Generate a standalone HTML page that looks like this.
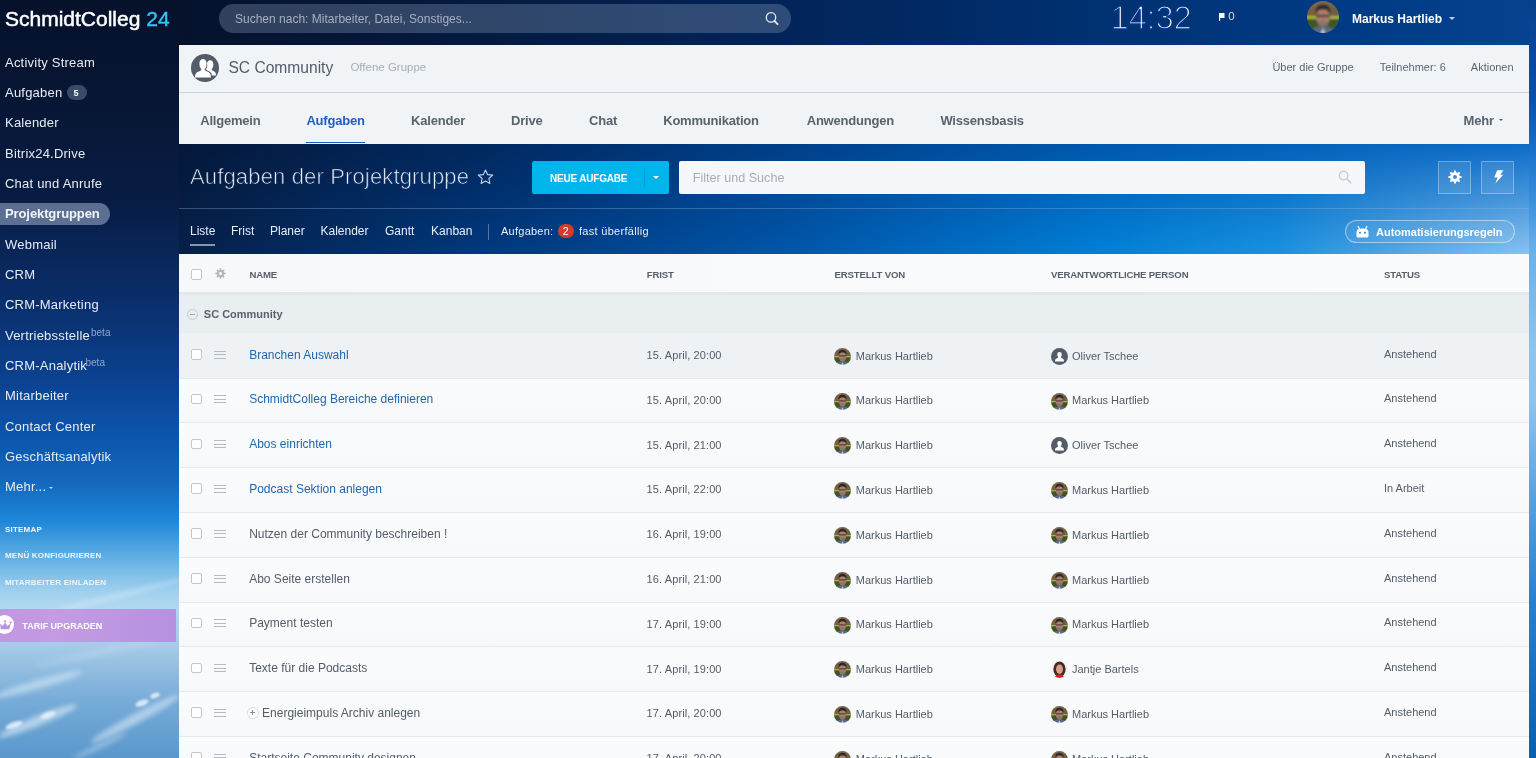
<!DOCTYPE html>
<html><head><meta charset="utf-8">
<style>
*{margin:0;padding:0;box-sizing:border-box}
html,body{width:1536px;height:758px;overflow:hidden}
body{position:relative;font-family:"Liberation Sans",sans-serif;line-height:1;background:#0a2a60}
.a{position:absolute;white-space:nowrap;line-height:1}
body{-webkit-font-smoothing:antialiased}
#sbbg{position:absolute;left:0;top:0;width:179px;height:758px;
background:
 linear-gradient(180deg, #06112a 0px, #071634 100px, #081c44 200px, #0a2e6a 300px, #0b4290 380px, #0c56ae 440px, #1466bc 480px, #1a7ed0 510px, #2088d8 522px, #4aa2e0 545px, #78bce8 570px, #a0d0ee 592px, #b0d8f0 606px, #a6cce8 645px, #8cbadf 675px, #78acd8 700px, #629ecf 740px, #5a98cc 758px);
}
#topbg{position:absolute;left:179px;top:0;width:1357px;height:45px;
background:linear-gradient(90deg, #06122c 0px, #041a40 300px, #02245a 620px, #00306f 900px, #003a84 1150px, #06428f 1357px);}
#bandbg{position:absolute;left:179px;top:143px;width:1357px;height:111px;
background:linear-gradient(90deg, #05183a 0px, #022a62 320px, #00408a 620px, #0058ac 920px, #0a6cc8 1357px);}
#bandbg2{position:absolute;left:179px;top:143px;width:1357px;height:111px;
background:linear-gradient(90deg, #062048 0px, #003a80 320px, #0058ac 620px, #0080d8 920px, #1a92e0 1100px, #4aa4e6 1200px, #8cc4f0 1357px);
-webkit-mask-image:linear-gradient(180deg, transparent 0%, #000 100%);mask-image:linear-gradient(180deg, transparent 0%, #000 100%);}
#rsbg{position:absolute;left:1529px;top:0;width:7px;height:758px;
background:linear-gradient(180deg,#083f8a 0px,#0a50a8 100px,#1a70c8 150px,#3a90dc 200px,#6ab0e8 250px,#8cc4ee 350px,#8ec4ee 400px,#5aa0dc 500px,#2a80cc 600px,#0b5fa8 758px);}
</style></head>
<body>
<svg width="0" height="0" style="position:absolute"><defs>
<radialGradient id="skin" cx="50%" cy="45%" r="50%"><stop offset="0" stop-color="#d3a080"/><stop offset="1" stop-color="#a0705a"/></radialGradient>
<filter id="bl" x="-10%" y="-10%" width="120%" height="120%"><feGaussianBlur stdDeviation="1.1"/></filter>
<g id="mh"><g filter="url(#bl)"><rect x="-2" y="-2" width="36" height="36" fill="#5e4e3a"/><rect x="-2" y="-2" width="36" height="9" fill="#7a6650"/><rect x="-2" y="6" width="11" height="9" fill="#7c5e40"/><rect x="23" y="6" width="11" height="9" fill="#6e5e44"/><rect x="-2" y="15" width="36" height="3" fill="#a2b246"/><rect x="-2" y="18" width="36" height="16" fill="#3e5628"/><path d="M2 34 C4 27 9 25.5 16 25.5 C23 25.5 28 27 30 34 Z" fill="#5a6a82"/><path d="M12.5 34 L16 27 L19.5 34 Z" fill="#b8c4d8"/><ellipse cx="16" cy="16.5" rx="6.6" ry="9.3" fill="#ac7e6c"/><path d="M8.5 12 C8.3 5.5 11.5 3.5 16 3.5 C20.5 3.5 23.7 5.5 23.5 12 C22 9.2 19 8.6 16 8.6 C13 8.6 10 9.2 8.5 12 Z" fill="#2e2a28"/><rect x="9" y="13.8" width="14" height="2.4" rx="1" fill="#4a3a36" opacity=".85"/><ellipse cx="16" cy="22.5" rx="5" ry="3" fill="#8a7468"/></g></g>
<g id="jb"><g filter="url(#bl)"><rect x="-2" y="-2" width="36" height="36" fill="#f0f2f4"/><ellipse cx="16" cy="15.5" rx="11.5" ry="14.5" fill="#4a2a22"/><ellipse cx="16" cy="15.5" rx="6.5" ry="9" fill="#d8a08a"/><path d="M6 34 C8 27 11 25.5 16 25.5 C21 25.5 24 27 26 34 Z" fill="#d82222"/></g></g>
</defs></svg>
<div id="sbbg"></div><div id="topbg"></div><div id="bandbg"></div><div id="bandbg2"></div><div id="rsbg"></div>
<div id="wrap" style="position:absolute;left:0;top:0;width:1536px;height:758px;will-change:transform">
<div class="a" style="left:5.00px;top:8.00px;font-size:21px;color:#fff;letter-spacing:0px;-webkit-text-stroke:0.5px #fff">SchmidtColleg <span style="color:#2fc6f6;-webkit-text-stroke:0.4px #2fc6f6">24</span></div>
<div class="a" style="left:-10px;top:680px;width:95px;height:9px;border-radius:50%;background:rgba(240,248,255,0.45);transform:rotate(-16deg);filter:blur(2.5px)"></div>
<div class="a" style="left:-5px;top:716px;width:85px;height:10px;border-radius:50%;background:rgba(240,248,255,0.55);transform:rotate(-22deg);filter:blur(2.5px)"></div>
<div class="a" style="left:85px;top:714px;width:100px;height:10px;border-radius:50%;background:rgba(240,248,255,0.5);transform:rotate(-28deg);filter:blur(2.5px)"></div>
<div class="a" style="left:30px;top:650px;width:140px;height:5px;border-radius:50%;background:rgba(240,248,255,0.25);transform:rotate(-12deg);filter:blur(3px)"></div>
<div class="a" style="left:5px;top:722px;width:18px;height:6px;border-radius:50%;background:rgba(240,248,255,0.8);transform:rotate(-20deg);filter:blur(1.2px)"></div>
<div class="a" style="left:40px;top:712px;width:16px;height:6px;border-radius:50%;background:rgba(240,248,255,0.75);transform:rotate(-20deg);filter:blur(1.2px)"></div>
<div class="a" style="left:135px;top:700px;width:14px;height:6px;border-radius:50%;background:rgba(240,248,255,0.8);transform:rotate(-20deg);filter:blur(1.2px)"></div>
<div class="a" style="left:150px;top:693px;width:10px;height:5px;border-radius:50%;background:rgba(240,248,255,0.8);transform:rotate(-20deg);filter:blur(1.2px)"></div>
<div class="a" style="left:70px;top:743px;width:60px;height:6px;border-radius:50%;background:rgba(240,248,255,0.3);transform:rotate(-25deg);filter:blur(2px)"></div>
<div class="a" style="left:40px;top:594px;width:150px;height:5px;border-radius:50%;background:rgba(240,248,255,0.35);transform:rotate(-14deg);filter:blur(2.5px)"></div>
<div class="a" style="left:5.00px;top:56.00px;font-size:13px;color:#e6ebf2;letter-spacing:0.22px">Activity Stream</div>
<div class="a" style="left:5.00px;top:86.00px;font-size:13px;color:#e6ebf2;letter-spacing:0.22px">Aufgaben</div>
<div class="a" style="left:67.00px;top:85.33px;width:20.00px;height:15.00px;background:rgba(120,140,170,.45);border-radius:8px"></div>
<div class="a" style="left:73.50px;top:89.00px;font-size:9px;color:#fff;font-weight:bold;">5</div>
<div class="a" style="left:5.00px;top:116.00px;font-size:13px;color:#e6ebf2;letter-spacing:0.22px">Kalender</div>
<div class="a" style="left:5.00px;top:147.00px;font-size:13px;color:#e6ebf2;letter-spacing:0.22px">Bitrix24.Drive</div>
<div class="a" style="left:5.00px;top:177.00px;font-size:13px;color:#e6ebf2;letter-spacing:0.22px">Chat und Anrufe</div>
<div class="a" style="left:-10.00px;top:203.05px;width:119.50px;height:21.70px;background:rgba(195,210,235,.45);border-radius:11px"></div>
<div class="a" style="left:5.00px;top:207.00px;font-size:13px;color:#f2f5f9;font-weight:bold;letter-spacing:-0.1px">Projektgruppen</div>
<div class="a" style="left:5.00px;top:238.00px;font-size:13px;color:#e6ebf2;letter-spacing:0.22px">Webmail</div>
<div class="a" style="left:5.00px;top:268.00px;font-size:13px;color:#e6ebf2;letter-spacing:0.22px">CRM</div>
<div class="a" style="left:5.00px;top:298.00px;font-size:13px;color:#e6ebf2;letter-spacing:0.22px">CRM-Marketing</div>
<div class="a" style="left:5.00px;top:329.00px;font-size:13px;color:#e6ebf2;letter-spacing:0.22px">Vertriebsstelle</div>
<div class="a" style="left:91.00px;top:328.00px;font-size:10px;color:#8ea6c9;">beta</div>
<div class="a" style="left:5.00px;top:359.00px;font-size:13px;color:#e6ebf2;letter-spacing:0.22px">CRM-Analytik</div>
<div class="a" style="left:85.50px;top:358.00px;font-size:10px;color:#8ea6c9;">beta</div>
<div class="a" style="left:5.00px;top:389.00px;font-size:13px;color:#e6ebf2;letter-spacing:0.22px">Mitarbeiter</div>
<div class="a" style="left:5.00px;top:420.00px;font-size:13px;color:#e6ebf2;letter-spacing:0.22px">Contact Center</div>
<div class="a" style="left:5.00px;top:450.00px;font-size:13px;color:#e6ebf2;letter-spacing:0.22px">Geschäftsanalytik</div>
<div class="a" style="left:5.00px;top:480.00px;font-size:13px;color:#e6ebf2;letter-spacing:0.22px">Mehr...</div>
<div class="a" style="left:49px;top:487.2px;width:0;height:0;border-left:2.5px solid transparent;border-right:2.5px solid transparent;border-top:2.5px solid #cbd6e6"></div>
<div class="a" style="left:5.00px;top:526.00px;font-size:8px;color:#eef5fb;font-weight:bold;letter-spacing:0.2px">SITEMAP</div>
<div class="a" style="left:5.00px;top:552.00px;font-size:8px;color:#eef5fb;font-weight:bold;letter-spacing:0.2px">MENÜ KONFIGURIEREN</div>
<div class="a" style="left:5.00px;top:579.00px;font-size:8px;color:#eef5fb;font-weight:bold;letter-spacing:0.2px">MITARBEITER EINLADEN</div>
<div class="a" style="left:0.00px;top:608.60px;width:176.00px;height:33.20px;background:linear-gradient(90deg,#bf96e0,#c59ce3 30%,#b690e0 100%)"></div>
<div class="a" style="left:-5px;top:615.2px;width:19px;height:19px;border-radius:50%;background:#fff"></div>
<svg class="a" style="left:0;top:619.5px" width="12" height="10" viewBox="0 0 12 10"><circle cx="5" cy="1.3" r="1.1" fill="#b991e0"/><circle cx="10.6" cy="2.6" r="1.1" fill="#b991e0"/><path d="M0 3.5 L2.8 6 L5 2.2 L7.3 6 L10.6 3.6 L9.3 9.3 H0.8 Z" fill="#b991e0"/></svg>
<div class="a" style="left:22.30px;top:622.00px;font-size:9px;color:#fff;font-weight:bold;letter-spacing:0px">TARIF UPGRADEN</div>
<div class="a" style="left:219.00px;top:4.00px;width:572.00px;height:29.00px;background:rgba(135,155,185,.34);border-radius:15px"></div>
<div class="a" style="left:235.00px;top:13.00px;font-size:12px;color:#a7b0c0;">Suchen nach: Mitarbeiter, Datei, Sonstiges...</div>
<svg class="a" style="left:764px;top:10px" width="16" height="16" viewBox="0 0 16 16"><circle cx="7" cy="7.4" r="4.7" fill="none" stroke="#e4e9ef" stroke-width="1.3"/><path d="M10.4 11 L13.6 14.2" stroke="#e4e9ef" stroke-width="1.8" stroke-linecap="round"/></svg>
<div class="a" style="left:1110.50px;top:1.00px;font-size:33px;color:#f4f7fb;letter-spacing:-0.3px;-webkit-text-stroke:1.7px #023782">14:32</div>
<svg class="a" style="left:1219px;top:12.8px" width="6" height="8.2" viewBox="0 0 6 8.2"><path d="M0 0 H5.5 V5 H1.2 V8.2 H0 Z" fill="#fff"/></svg>
<div class="a" style="left:1228.30px;top:11.00px;font-size:11.5px;color:rgba(225,232,242,.9);">0</div>
<div class="a" style="left:1307px;top:1px;width:32px;height:32px;border-radius:50%;overflow:hidden"><svg width="32" height="32" viewBox="0 0 32 32"><use href="#mh"/></svg></div>
<div class="a" style="left:1352.00px;top:13.00px;font-size:12px;color:#fff;font-weight:bold;">Markus Hartlieb</div>
<div class="a" style="left:1449px;top:17px;width:0;height:0;border-left:3px solid transparent;border-right:3px solid transparent;border-top:3px solid #c5d0e0"></div>
<div class="a" style="left:179.00px;top:45.00px;width:1350.00px;height:98.50px;background:#f1f4f7"></div>
<div class="a" style="left:179.00px;top:92.00px;width:1350.00px;height:1.00px;background:#cfd4da"></div>
<svg class="a" style="left:191px;top:54px" width="28" height="28" viewBox="0 0 28 28"><circle cx="14" cy="14" r="14" fill="#535c69"/><path d="M4 23.5 C4 19 6 18 9 17 C10 16.5 10.5 16 10.3 15 C9 14 8.3 11.5 8.4 9.5 C8.5 6.5 10 5 12 5 C14 5 15.5 6.5 15.6 9.5 C15.7 11.5 15 14 13.7 15 C13.5 16 14 16.5 15 17 C18 18 20 19 20 23.5 Z" fill="#fff"/><path d="M16 9.2 C16.5 7 17.7 6.2 19 6.2 C21 6.2 22.4 7.8 22.4 10.3 C22.4 12.3 21.7 14.2 20.7 15 C20.5 16 21 16.3 22 16.8 C24 17.6 25 18.7 25 21.5 L21 21.5 C20.8 19 19.5 17.8 16.5 16.6 C15.5 16.2 15 15.5 15 15 C16.3 13.7 16.6 11.7 16 9.2 Z" fill="#fff"/></svg>
<div class="a" style="left:228.40px;top:60.00px;font-size:15.6px;color:#535c69;">SC Community</div>
<div class="a" style="left:350.40px;top:62.00px;font-size:11.5px;color:#a9aeb5;">Offene Gruppe</div>
<div class="a" style="left:1272.40px;top:62.00px;font-size:11px;color:#5f6670;">Über die Gruppe</div>
<div class="a" style="left:1379.80px;top:62.00px;font-size:11px;color:#5f6670;">Teilnehmer: 6</div>
<div class="a" style="left:1470.80px;top:62.00px;font-size:11px;color:#5f6670;">Aktionen</div>
<div class="a" style="left:200.20px;top:114.00px;font-size:13px;color:#5a626e;font-weight:bold;letter-spacing:-0.2px">Allgemein</div>
<div class="a" style="left:306.40px;top:114.00px;font-size:13px;color:#1f5ec6;font-weight:bold;letter-spacing:-0.2px">Aufgaben</div>
<div class="a" style="left:306.40px;top:141.80px;width:58.60px;height:1.70px;background:#1a5bc8"></div>
<div class="a" style="left:411.00px;top:114.00px;font-size:13px;color:#5a626e;font-weight:bold;letter-spacing:-0.2px">Kalender</div>
<div class="a" style="left:511.00px;top:114.00px;font-size:13px;color:#5a626e;font-weight:bold;letter-spacing:-0.2px">Drive</div>
<div class="a" style="left:589.00px;top:114.00px;font-size:13px;color:#5a626e;font-weight:bold;letter-spacing:-0.2px">Chat</div>
<div class="a" style="left:663.20px;top:114.00px;font-size:13px;color:#5a626e;font-weight:bold;letter-spacing:-0.2px">Kommunikation</div>
<div class="a" style="left:806.70px;top:114.00px;font-size:13px;color:#5a626e;font-weight:bold;letter-spacing:-0.2px">Anwendungen</div>
<div class="a" style="left:940.40px;top:114.00px;font-size:13px;color:#5a626e;font-weight:bold;letter-spacing:-0.2px">Wissensbasis</div>
<div class="a" style="left:1463.50px;top:114.00px;font-size:13px;color:#5a626e;font-weight:bold;letter-spacing:-0.2px">Mehr</div>
<div class="a" style="left:1499px;top:119px;width:0;height:0;border-left:2.5px solid transparent;border-right:2.5px solid transparent;border-top:2.5px solid #535c69"></div>
<svg class="a" style="left:180px;top:155px" width="300" height="40"><defs><linearGradient id="tg" gradientUnits="userSpaceOnUse" x1="0" y1="0" x2="300" y2="0"><stop offset="0" stop-color="#061b42"/><stop offset="1" stop-color="#022f6c"/></linearGradient></defs><text x="10" y="29" font-family="Liberation Sans" font-size="22" letter-spacing="0.15" fill="#e9eff8" stroke="url(#tg)" stroke-width="0.7">Aufgaben der Projektgruppe</text></svg>
<svg class="a" style="left:477px;top:169px" width="17" height="16" viewBox="0 0 17 16"><path d="M8.5 1 L10.6 5.6 L15.7 6.1 L11.9 9.5 L12.9 14.5 L8.5 12 L4.1 14.5 L5.1 9.5 L1.3 6.1 L6.4 5.6 Z" fill="none" stroke="#c8d4e6" stroke-width="1.1" stroke-linejoin="round"/></svg>
<div class="a" style="left:532.00px;top:161.00px;width:137.00px;height:33.00px;background:#00b4ec;border-radius:2px"></div>
<div class="a" style="left:643.50px;top:168.00px;width:1.00px;height:19.00px;background:rgba(0,90,140,.25)"></div>
<div class="a" style="left:550.00px;top:174.00px;font-size:10px;color:#fff;font-weight:bold;letter-spacing:-0.2px">NEUE AUFGABE</div>
<div class="a" style="left:653px;top:176px;width:0;height:0;border-left:3px solid transparent;border-right:3px solid transparent;border-top:3px solid #fff"></div>
<div class="a" style="left:679.00px;top:161.00px;width:686.00px;height:33.00px;background:#f5f7fa;border-radius:2px"></div>
<div class="a" style="left:692.70px;top:172.00px;font-size:12.6px;color:#a8adb4;">Filter und Suche</div>
<svg class="a" style="left:1338px;top:170px" width="14" height="14" viewBox="0 0 14 14"><circle cx="5.6" cy="5.6" r="4.3" fill="none" stroke="#c4c8cd" stroke-width="1.2"/><path d="M8.8 8.8 L12.6 12.6" stroke="#c4c8cd" stroke-width="1.5" stroke-linecap="round"/></svg>
<div class="a" style="left:1438.00px;top:161.00px;width:33.00px;height:33.00px;background:rgba(255,255,255,.1);border:1px solid rgba(255,255,255,.3)"></div>
<svg class="a" style="left:1448px;top:170.3px" width="14" height="14" viewBox="0 0 16 16"><path fill="#fff" fill-rule="evenodd" d="M6.93 0.48 L9.07 0.48 L9.23 2.54 L11.00 3.27 L12.56 1.92 L14.08 3.44 L12.73 5.00 L13.46 6.77 L15.52 6.93 L15.52 9.07 L13.46 9.23 L12.73 11.00 L14.08 12.56 L12.56 14.08 L11.00 12.73 L9.23 13.46 L9.07 15.52 L6.93 15.52 L6.77 13.46 L5.00 12.73 L3.44 14.08 L1.92 12.56 L3.27 11.00 L2.54 9.23 L0.48 9.07 L0.48 6.93 L2.54 6.77 L3.27 5.00 L1.92 3.44 L3.44 1.92 L5.00 3.27 L6.77 2.54 Z M10.30 8.00 A2.3 2.3 0 1 0 5.70 8.00 A2.3 2.3 0 1 0 10.30 8.00 Z"/></svg>
<div class="a" style="left:1481.00px;top:161.00px;width:33.00px;height:33.00px;background:rgba(255,255,255,.1);border:1px solid rgba(255,255,255,.3)"></div>
<svg class="a" style="left:1492.5px;top:170px" width="11" height="14" viewBox="0 0 11 14"><path d="M4.2 0.3 L10.5 0.3 L7.2 4.8 L10.2 4.8 L2.3 13.6 L4.6 7.6 L1.2 7.6 Z" fill="#fff"/></svg>
<div class="a" style="left:179.00px;top:208.00px;width:1350.00px;height:1.00px;background:rgba(150,180,220,.35)"></div>
<div class="a" style="left:190.00px;top:225.00px;font-size:12px;color:#e6edf7;">Liste</div>
<div class="a" style="left:230.90px;top:225.00px;font-size:12px;color:#e6edf7;">Frist</div>
<div class="a" style="left:270.00px;top:225.00px;font-size:12px;color:#e6edf7;">Planer</div>
<div class="a" style="left:320.50px;top:225.00px;font-size:12px;color:#e6edf7;">Kalender</div>
<div class="a" style="left:385.00px;top:225.00px;font-size:12px;color:#e6edf7;">Gantt</div>
<div class="a" style="left:431.10px;top:225.00px;font-size:12px;color:#e6edf7;">Kanban</div>
<div class="a" style="left:190.00px;top:244.00px;width:25.00px;height:2.00px;background:rgba(220,230,245,.6)"></div>
<div class="a" style="left:488.00px;top:224.00px;width:1.00px;height:16.00px;background:rgba(200,215,235,.4)"></div>
<div class="a" style="left:501.00px;top:226.00px;font-size:11px;color:#e6edf7;letter-spacing:0.25px">Aufgaben:</div>
<div class="a" style="left:557.50px;top:224.30px;width:16.50px;height:13.70px;background:#d63a2d;border-radius:7px"></div>
<div class="a" style="left:562.80px;top:226.00px;font-size:10.5px;color:#fff;">2</div>
<div class="a" style="left:579.00px;top:226.00px;font-size:11px;color:#e6edf7;letter-spacing:0.3px">fast überfällig</div>
<div class="a" style="left:1345.00px;top:220.00px;width:170.00px;height:23.00px;border:1px solid rgba(255,255,255,.45);border-radius:12px;background:rgba(255,255,255,.08)"></div>
<svg class="a" style="left:1355px;top:225px" width="15" height="13" viewBox="0 0 15 13"><path d="M3 1 L4.5 4 M12 1 L10.5 4" stroke="#fff" stroke-width="1.2"/><path d="M1.5 7 C1.5 4.5 3.5 3.5 7.5 3.5 C11.5 3.5 13.5 4.5 13.5 7 V11 C13.5 12 12.5 12.5 11.5 12.5 H3.5 C2.5 12.5 1.5 12 1.5 11 Z" fill="#fff"/><circle cx="5" cy="7.8" r="1" fill="#3a8ad8"/><circle cx="10" cy="7.8" r="1" fill="#3a8ad8"/></svg>
<div class="a" style="left:1376.00px;top:227.00px;font-size:11px;color:#fff;font-weight:bold;">Automatisierungsregeln</div>
<div class="a" style="left:179.00px;top:254.00px;width:1350.00px;height:38.00px;background:linear-gradient(90deg,#f6f8fa,#f9fbfc)"></div>
<div class="a" style="left:179.00px;top:292.00px;width:1350.00px;height:2.50px;background:#e4e8ec"></div>
<div class="a" style="left:191.00px;top:269.00px;width:10.50px;height:10.50px;border:1px solid #c2c7cd;border-radius:2px;background:#fff"></div>
<svg class="a" style="left:215.2px;top:268px" width="11" height="11" viewBox="0 0 16 16"><path fill="#b3b8bf" fill-rule="evenodd" d="M6.93 0.48 L9.07 0.48 L9.23 2.54 L11.00 3.27 L12.56 1.92 L14.08 3.44 L12.73 5.00 L13.46 6.77 L15.52 6.93 L15.52 9.07 L13.46 9.23 L12.73 11.00 L14.08 12.56 L12.56 14.08 L11.00 12.73 L9.23 13.46 L9.07 15.52 L6.93 15.52 L6.77 13.46 L5.00 12.73 L3.44 14.08 L1.92 12.56 L3.27 11.00 L2.54 9.23 L0.48 9.07 L0.48 6.93 L2.54 6.77 L3.27 5.00 L1.92 3.44 L3.44 1.92 L5.00 3.27 L6.77 2.54 Z M10.30 8.00 A2.3 2.3 0 1 0 5.70 8.00 A2.3 2.3 0 1 0 10.30 8.00 Z"/></svg>
<div class="a" style="left:249.40px;top:270.00px;font-size:9.6px;color:#58606b;font-weight:bold;letter-spacing:-0.15px">NAME</div>
<div class="a" style="left:646.70px;top:270.00px;font-size:9.6px;color:#58606b;font-weight:bold;letter-spacing:-0.15px">FRIST</div>
<div class="a" style="left:834.50px;top:270.00px;font-size:9.6px;color:#58606b;font-weight:bold;letter-spacing:-0.15px">ERSTELLT VON</div>
<div class="a" style="left:1051.00px;top:270.00px;font-size:9.6px;color:#58606b;font-weight:bold;letter-spacing:-0.15px">VERANTWORTLICHE PERSON</div>
<div class="a" style="left:1384.00px;top:270.00px;font-size:9.6px;color:#58606b;font-weight:bold;letter-spacing:-0.15px">STATUS</div>
<div class="a" style="left:179.00px;top:294.50px;width:1350.00px;height:38.50px;background:#e9eef1"></div>
<div class="a" style="left:186.5px;top:308.5px;width:11px;height:11px;border:1px solid #c5cad0;border-radius:50%"></div>
<div class="a" style="left:189.50px;top:313.50px;width:5.00px;height:1.00px;background:#a0a6ad"></div>
<div class="a" style="left:203.80px;top:309.00px;font-size:11px;color:#59616d;font-weight:bold;">SC Community</div>
<div class="a" style="left:179.00px;top:333.00px;width:1350.00px;height:44.81px;background:#eef2f4"></div>
<div class="a" style="left:191.00px;top:349.00px;width:10.50px;height:10.50px;border:1px solid #c2c7cd;border-radius:2px;background:#fff"></div>
<div class="a" style="left:214.00px;top:350.50px;width:12.00px;height:1.00px;background:#b6bbc1"></div>
<div class="a" style="left:214.00px;top:354.00px;width:12.00px;height:1.00px;background:#b6bbc1"></div>
<div class="a" style="left:214.00px;top:357.50px;width:12.00px;height:1.00px;background:#b6bbc1"></div>
<div class="a" style="left:249.20px;top:349.00px;font-size:12px;color:#2067b0;">Branchen Auswahl</div>
<div class="a" style="left:646.60px;top:350.00px;font-size:11px;color:#535c69;letter-spacing:0.1px">15. April, 20:00</div>
<div class="a" style="left:834.00px;top:347.70px;width:17px;height:17px;border-radius:50%;overflow:hidden"><svg width="17" height="17" viewBox="0 0 32 32"><use href="#mh"/></svg></div>
<div class="a" style="left:855.80px;top:351.00px;font-size:11px;color:#535c69;">Markus Hartlieb</div>
<svg class="a" style="left:1051.20px;top:347.70px" width="17" height="17" viewBox="0 0 17 17"><circle cx="8.5" cy="8.5" r="8.5" fill="#535c69"/><path d="M4 13.6 C4 11.3 5 10.6 6.6 10.1 C7.2 9.9 7.3 9.5 7.1 9.1 C6.5 8.5 6.3 7.4 6.3 6.3 C6.3 4.7 7.2 3.9 8.5 3.9 C9.8 3.9 10.7 4.7 10.7 6.3 C10.7 7.4 10.5 8.5 9.9 9.1 C9.7 9.5 9.8 9.9 10.4 10.1 C12 10.6 13 11.3 13 13.6 Z" fill="#fff"/></svg>
<div class="a" style="left:1072.00px;top:351.00px;font-size:11px;color:#535c69;">Oliver Tschee</div>
<div class="a" style="left:1384.00px;top:349.00px;font-size:11px;color:#535c69;">Anstehend</div>
<div class="a" style="left:179.00px;top:377.81px;width:1350.00px;height:44.81px;background:linear-gradient(180deg,#fbfcfd,#f6f8fa)"></div>
<div class="a" style="left:179.00px;top:377.61px;width:1350.00px;height:1.00px;background:#e6eaee"></div>
<div class="a" style="left:191.00px;top:393.81px;width:10.50px;height:10.50px;border:1px solid #c2c7cd;border-radius:2px;background:#fff"></div>
<div class="a" style="left:214.00px;top:395.31px;width:12.00px;height:1.00px;background:#b6bbc1"></div>
<div class="a" style="left:214.00px;top:398.81px;width:12.00px;height:1.00px;background:#b6bbc1"></div>
<div class="a" style="left:214.00px;top:402.31px;width:12.00px;height:1.00px;background:#b6bbc1"></div>
<div class="a" style="left:249.20px;top:393.00px;font-size:12px;color:#2067b0;">SchmidtColleg Bereiche definieren</div>
<div class="a" style="left:646.60px;top:395.00px;font-size:11px;color:#535c69;letter-spacing:0.1px">15. April, 20:00</div>
<div class="a" style="left:834.00px;top:392.51px;width:17px;height:17px;border-radius:50%;overflow:hidden"><svg width="17" height="17" viewBox="0 0 32 32"><use href="#mh"/></svg></div>
<div class="a" style="left:855.80px;top:395.00px;font-size:11px;color:#535c69;">Markus Hartlieb</div>
<div class="a" style="left:1051.20px;top:392.51px;width:17px;height:17px;border-radius:50%;overflow:hidden"><svg width="17" height="17" viewBox="0 0 32 32"><use href="#mh"/></svg></div>
<div class="a" style="left:1072.00px;top:395.00px;font-size:11px;color:#535c69;">Markus Hartlieb</div>
<div class="a" style="left:1384.00px;top:393.00px;font-size:11px;color:#535c69;">Anstehend</div>
<div class="a" style="left:179.00px;top:422.62px;width:1350.00px;height:44.81px;background:linear-gradient(180deg,#fbfcfd,#f6f8fa)"></div>
<div class="a" style="left:179.00px;top:422.42px;width:1350.00px;height:1.00px;background:#e6eaee"></div>
<div class="a" style="left:191.00px;top:438.62px;width:10.50px;height:10.50px;border:1px solid #c2c7cd;border-radius:2px;background:#fff"></div>
<div class="a" style="left:214.00px;top:440.12px;width:12.00px;height:1.00px;background:#b6bbc1"></div>
<div class="a" style="left:214.00px;top:443.62px;width:12.00px;height:1.00px;background:#b6bbc1"></div>
<div class="a" style="left:214.00px;top:447.12px;width:12.00px;height:1.00px;background:#b6bbc1"></div>
<div class="a" style="left:249.20px;top:438.00px;font-size:12px;color:#2067b0;">Abos einrichten</div>
<div class="a" style="left:646.60px;top:440.00px;font-size:11px;color:#535c69;letter-spacing:0.1px">15. April, 21:00</div>
<div class="a" style="left:834.00px;top:437.32px;width:17px;height:17px;border-radius:50%;overflow:hidden"><svg width="17" height="17" viewBox="0 0 32 32"><use href="#mh"/></svg></div>
<div class="a" style="left:855.80px;top:440.00px;font-size:11px;color:#535c69;">Markus Hartlieb</div>
<svg class="a" style="left:1051.20px;top:437.32px" width="17" height="17" viewBox="0 0 17 17"><circle cx="8.5" cy="8.5" r="8.5" fill="#535c69"/><path d="M4 13.6 C4 11.3 5 10.6 6.6 10.1 C7.2 9.9 7.3 9.5 7.1 9.1 C6.5 8.5 6.3 7.4 6.3 6.3 C6.3 4.7 7.2 3.9 8.5 3.9 C9.8 3.9 10.7 4.7 10.7 6.3 C10.7 7.4 10.5 8.5 9.9 9.1 C9.7 9.5 9.8 9.9 10.4 10.1 C12 10.6 13 11.3 13 13.6 Z" fill="#fff"/></svg>
<div class="a" style="left:1072.00px;top:440.00px;font-size:11px;color:#535c69;">Oliver Tschee</div>
<div class="a" style="left:1384.00px;top:438.00px;font-size:11px;color:#535c69;">Anstehend</div>
<div class="a" style="left:179.00px;top:467.43px;width:1350.00px;height:44.81px;background:linear-gradient(180deg,#fbfcfd,#f6f8fa)"></div>
<div class="a" style="left:179.00px;top:467.23px;width:1350.00px;height:1.00px;background:#e6eaee"></div>
<div class="a" style="left:191.00px;top:483.43px;width:10.50px;height:10.50px;border:1px solid #c2c7cd;border-radius:2px;background:#fff"></div>
<div class="a" style="left:214.00px;top:484.93px;width:12.00px;height:1.00px;background:#b6bbc1"></div>
<div class="a" style="left:214.00px;top:488.43px;width:12.00px;height:1.00px;background:#b6bbc1"></div>
<div class="a" style="left:214.00px;top:491.93px;width:12.00px;height:1.00px;background:#b6bbc1"></div>
<div class="a" style="left:249.20px;top:483.00px;font-size:12px;color:#2067b0;">Podcast Sektion anlegen</div>
<div class="a" style="left:646.60px;top:484.00px;font-size:11px;color:#535c69;letter-spacing:0.1px">15. April, 22:00</div>
<div class="a" style="left:834.00px;top:482.13px;width:17px;height:17px;border-radius:50%;overflow:hidden"><svg width="17" height="17" viewBox="0 0 32 32"><use href="#mh"/></svg></div>
<div class="a" style="left:855.80px;top:485.00px;font-size:11px;color:#535c69;">Markus Hartlieb</div>
<div class="a" style="left:1051.20px;top:482.13px;width:17px;height:17px;border-radius:50%;overflow:hidden"><svg width="17" height="17" viewBox="0 0 32 32"><use href="#mh"/></svg></div>
<div class="a" style="left:1072.00px;top:485.00px;font-size:11px;color:#535c69;">Markus Hartlieb</div>
<div class="a" style="left:1384.00px;top:483.00px;font-size:11px;color:#535c69;">In Arbeit</div>
<div class="a" style="left:179.00px;top:512.24px;width:1350.00px;height:44.81px;background:linear-gradient(180deg,#fbfcfd,#f6f8fa)"></div>
<div class="a" style="left:179.00px;top:512.04px;width:1350.00px;height:1.00px;background:#e6eaee"></div>
<div class="a" style="left:191.00px;top:528.24px;width:10.50px;height:10.50px;border:1px solid #c2c7cd;border-radius:2px;background:#fff"></div>
<div class="a" style="left:214.00px;top:529.74px;width:12.00px;height:1.00px;background:#b6bbc1"></div>
<div class="a" style="left:214.00px;top:533.24px;width:12.00px;height:1.00px;background:#b6bbc1"></div>
<div class="a" style="left:214.00px;top:536.74px;width:12.00px;height:1.00px;background:#b6bbc1"></div>
<div class="a" style="left:249.20px;top:528.00px;font-size:12px;color:#535c69;">Nutzen der Community beschreiben !</div>
<div class="a" style="left:646.60px;top:529.00px;font-size:11px;color:#535c69;letter-spacing:0.1px">16. April, 19:00</div>
<div class="a" style="left:834.00px;top:526.94px;width:17px;height:17px;border-radius:50%;overflow:hidden"><svg width="17" height="17" viewBox="0 0 32 32"><use href="#mh"/></svg></div>
<div class="a" style="left:855.80px;top:530.00px;font-size:11px;color:#535c69;">Markus Hartlieb</div>
<div class="a" style="left:1051.20px;top:526.94px;width:17px;height:17px;border-radius:50%;overflow:hidden"><svg width="17" height="17" viewBox="0 0 32 32"><use href="#mh"/></svg></div>
<div class="a" style="left:1072.00px;top:530.00px;font-size:11px;color:#535c69;">Markus Hartlieb</div>
<div class="a" style="left:1384.00px;top:528.00px;font-size:11px;color:#535c69;">Anstehend</div>
<div class="a" style="left:179.00px;top:557.05px;width:1350.00px;height:44.81px;background:linear-gradient(180deg,#fbfcfd,#f6f8fa)"></div>
<div class="a" style="left:179.00px;top:556.85px;width:1350.00px;height:1.00px;background:#e6eaee"></div>
<div class="a" style="left:191.00px;top:573.05px;width:10.50px;height:10.50px;border:1px solid #c2c7cd;border-radius:2px;background:#fff"></div>
<div class="a" style="left:214.00px;top:574.55px;width:12.00px;height:1.00px;background:#b6bbc1"></div>
<div class="a" style="left:214.00px;top:578.05px;width:12.00px;height:1.00px;background:#b6bbc1"></div>
<div class="a" style="left:214.00px;top:581.55px;width:12.00px;height:1.00px;background:#b6bbc1"></div>
<div class="a" style="left:249.20px;top:573.00px;font-size:12px;color:#535c69;">Abo Seite erstellen</div>
<div class="a" style="left:646.60px;top:574.00px;font-size:11px;color:#535c69;letter-spacing:0.1px">16. April, 21:00</div>
<div class="a" style="left:834.00px;top:571.75px;width:17px;height:17px;border-radius:50%;overflow:hidden"><svg width="17" height="17" viewBox="0 0 32 32"><use href="#mh"/></svg></div>
<div class="a" style="left:855.80px;top:575.00px;font-size:11px;color:#535c69;">Markus Hartlieb</div>
<div class="a" style="left:1051.20px;top:571.75px;width:17px;height:17px;border-radius:50%;overflow:hidden"><svg width="17" height="17" viewBox="0 0 32 32"><use href="#mh"/></svg></div>
<div class="a" style="left:1072.00px;top:575.00px;font-size:11px;color:#535c69;">Markus Hartlieb</div>
<div class="a" style="left:1384.00px;top:573.00px;font-size:11px;color:#535c69;">Anstehend</div>
<div class="a" style="left:179.00px;top:601.86px;width:1350.00px;height:44.81px;background:linear-gradient(180deg,#fbfcfd,#f6f8fa)"></div>
<div class="a" style="left:179.00px;top:601.66px;width:1350.00px;height:1.00px;background:#e6eaee"></div>
<div class="a" style="left:191.00px;top:617.86px;width:10.50px;height:10.50px;border:1px solid #c2c7cd;border-radius:2px;background:#fff"></div>
<div class="a" style="left:214.00px;top:619.36px;width:12.00px;height:1.00px;background:#b6bbc1"></div>
<div class="a" style="left:214.00px;top:622.86px;width:12.00px;height:1.00px;background:#b6bbc1"></div>
<div class="a" style="left:214.00px;top:626.36px;width:12.00px;height:1.00px;background:#b6bbc1"></div>
<div class="a" style="left:249.20px;top:617.00px;font-size:12px;color:#535c69;">Payment testen</div>
<div class="a" style="left:646.60px;top:619.00px;font-size:11px;color:#535c69;letter-spacing:0.1px">17. April, 19:00</div>
<div class="a" style="left:834.00px;top:616.56px;width:17px;height:17px;border-radius:50%;overflow:hidden"><svg width="17" height="17" viewBox="0 0 32 32"><use href="#mh"/></svg></div>
<div class="a" style="left:855.80px;top:619.00px;font-size:11px;color:#535c69;">Markus Hartlieb</div>
<div class="a" style="left:1051.20px;top:616.56px;width:17px;height:17px;border-radius:50%;overflow:hidden"><svg width="17" height="17" viewBox="0 0 32 32"><use href="#mh"/></svg></div>
<div class="a" style="left:1072.00px;top:619.00px;font-size:11px;color:#535c69;">Markus Hartlieb</div>
<div class="a" style="left:1384.00px;top:617.00px;font-size:11px;color:#535c69;">Anstehend</div>
<div class="a" style="left:179.00px;top:646.67px;width:1350.00px;height:44.81px;background:linear-gradient(180deg,#fbfcfd,#f6f8fa)"></div>
<div class="a" style="left:179.00px;top:646.47px;width:1350.00px;height:1.00px;background:#e6eaee"></div>
<div class="a" style="left:191.00px;top:662.67px;width:10.50px;height:10.50px;border:1px solid #c2c7cd;border-radius:2px;background:#fff"></div>
<div class="a" style="left:214.00px;top:664.17px;width:12.00px;height:1.00px;background:#b6bbc1"></div>
<div class="a" style="left:214.00px;top:667.67px;width:12.00px;height:1.00px;background:#b6bbc1"></div>
<div class="a" style="left:214.00px;top:671.17px;width:12.00px;height:1.00px;background:#b6bbc1"></div>
<div class="a" style="left:249.20px;top:662.00px;font-size:12px;color:#535c69;">Texte für die Podcasts</div>
<div class="a" style="left:646.60px;top:664.00px;font-size:11px;color:#535c69;letter-spacing:0.1px">17. April, 19:00</div>
<div class="a" style="left:834.00px;top:661.37px;width:17px;height:17px;border-radius:50%;overflow:hidden"><svg width="17" height="17" viewBox="0 0 32 32"><use href="#mh"/></svg></div>
<div class="a" style="left:855.80px;top:664.00px;font-size:11px;color:#535c69;">Markus Hartlieb</div>
<div class="a" style="left:1051.20px;top:661.37px;width:17px;height:17px;border-radius:50%;overflow:hidden"><svg width="17" height="17" viewBox="0 0 32 32"><use href="#jb"/></svg></div>
<div class="a" style="left:1072.00px;top:664.00px;font-size:11px;color:#535c69;">Jantje Bartels</div>
<div class="a" style="left:1384.00px;top:662.00px;font-size:11px;color:#535c69;">Anstehend</div>
<div class="a" style="left:179.00px;top:691.48px;width:1350.00px;height:44.81px;background:linear-gradient(180deg,#fbfcfd,#f6f8fa)"></div>
<div class="a" style="left:179.00px;top:691.28px;width:1350.00px;height:1.00px;background:#e6eaee"></div>
<div class="a" style="left:191.00px;top:707.48px;width:10.50px;height:10.50px;border:1px solid #c2c7cd;border-radius:2px;background:#fff"></div>
<div class="a" style="left:214.00px;top:708.98px;width:12.00px;height:1.00px;background:#b6bbc1"></div>
<div class="a" style="left:214.00px;top:712.48px;width:12.00px;height:1.00px;background:#b6bbc1"></div>
<div class="a" style="left:214.00px;top:715.98px;width:12.00px;height:1.00px;background:#b6bbc1"></div>
<div class="a" style="left:246.5px;top:706.68px;width:12px;height:12px;border:1px solid #d9dde1;border-radius:50%;background:#fff"></div>
<div class="a" style="left:250.00px;top:712.18px;width:5.00px;height:1.00px;background:#8a9098"></div>
<div class="a" style="left:252.00px;top:710.18px;width:1.00px;height:5.00px;background:#8a9098"></div>
<div class="a" style="left:262.10px;top:707.00px;font-size:12px;color:#535c69;">Energieimpuls Archiv anlegen</div>
<div class="a" style="left:646.60px;top:708.00px;font-size:11px;color:#535c69;letter-spacing:0.1px">17. April, 20:00</div>
<div class="a" style="left:834.00px;top:706.18px;width:17px;height:17px;border-radius:50%;overflow:hidden"><svg width="17" height="17" viewBox="0 0 32 32"><use href="#mh"/></svg></div>
<div class="a" style="left:855.80px;top:709.00px;font-size:11px;color:#535c69;">Markus Hartlieb</div>
<div class="a" style="left:1051.20px;top:706.18px;width:17px;height:17px;border-radius:50%;overflow:hidden"><svg width="17" height="17" viewBox="0 0 32 32"><use href="#mh"/></svg></div>
<div class="a" style="left:1072.00px;top:709.00px;font-size:11px;color:#535c69;">Markus Hartlieb</div>
<div class="a" style="left:1384.00px;top:707.00px;font-size:11px;color:#535c69;">Anstehend</div>
<div class="a" style="left:179.00px;top:736.29px;width:1350.00px;height:44.81px;background:linear-gradient(180deg,#fbfcfd,#f6f8fa)"></div>
<div class="a" style="left:179.00px;top:736.09px;width:1350.00px;height:1.00px;background:#e6eaee"></div>
<div class="a" style="left:191.00px;top:752.29px;width:10.50px;height:10.50px;border:1px solid #c2c7cd;border-radius:2px;background:#fff"></div>
<div class="a" style="left:214.00px;top:753.79px;width:12.00px;height:1.00px;background:#b6bbc1"></div>
<div class="a" style="left:214.00px;top:757.29px;width:12.00px;height:1.00px;background:#b6bbc1"></div>
<div class="a" style="left:214.00px;top:760.79px;width:12.00px;height:1.00px;background:#b6bbc1"></div>
<div class="a" style="left:249.20px;top:752.00px;font-size:12px;color:#535c69;">Startseite Community designen</div>
<div class="a" style="left:646.60px;top:753.00px;font-size:11px;color:#535c69;letter-spacing:0.1px">17. April, 20:00</div>
<div class="a" style="left:834.00px;top:750.99px;width:17px;height:17px;border-radius:50%;overflow:hidden"><svg width="17" height="17" viewBox="0 0 32 32"><use href="#mh"/></svg></div>
<div class="a" style="left:855.80px;top:754.00px;font-size:11px;color:#535c69;">Markus Hartlieb</div>
<div class="a" style="left:1051.20px;top:750.99px;width:17px;height:17px;border-radius:50%;overflow:hidden"><svg width="17" height="17" viewBox="0 0 32 32"><use href="#mh"/></svg></div>
<div class="a" style="left:1072.00px;top:754.00px;font-size:11px;color:#535c69;">Markus Hartlieb</div>
<div class="a" style="left:1384.00px;top:752.00px;font-size:11px;color:#535c69;">Anstehend</div>
</div>
</body></html>
